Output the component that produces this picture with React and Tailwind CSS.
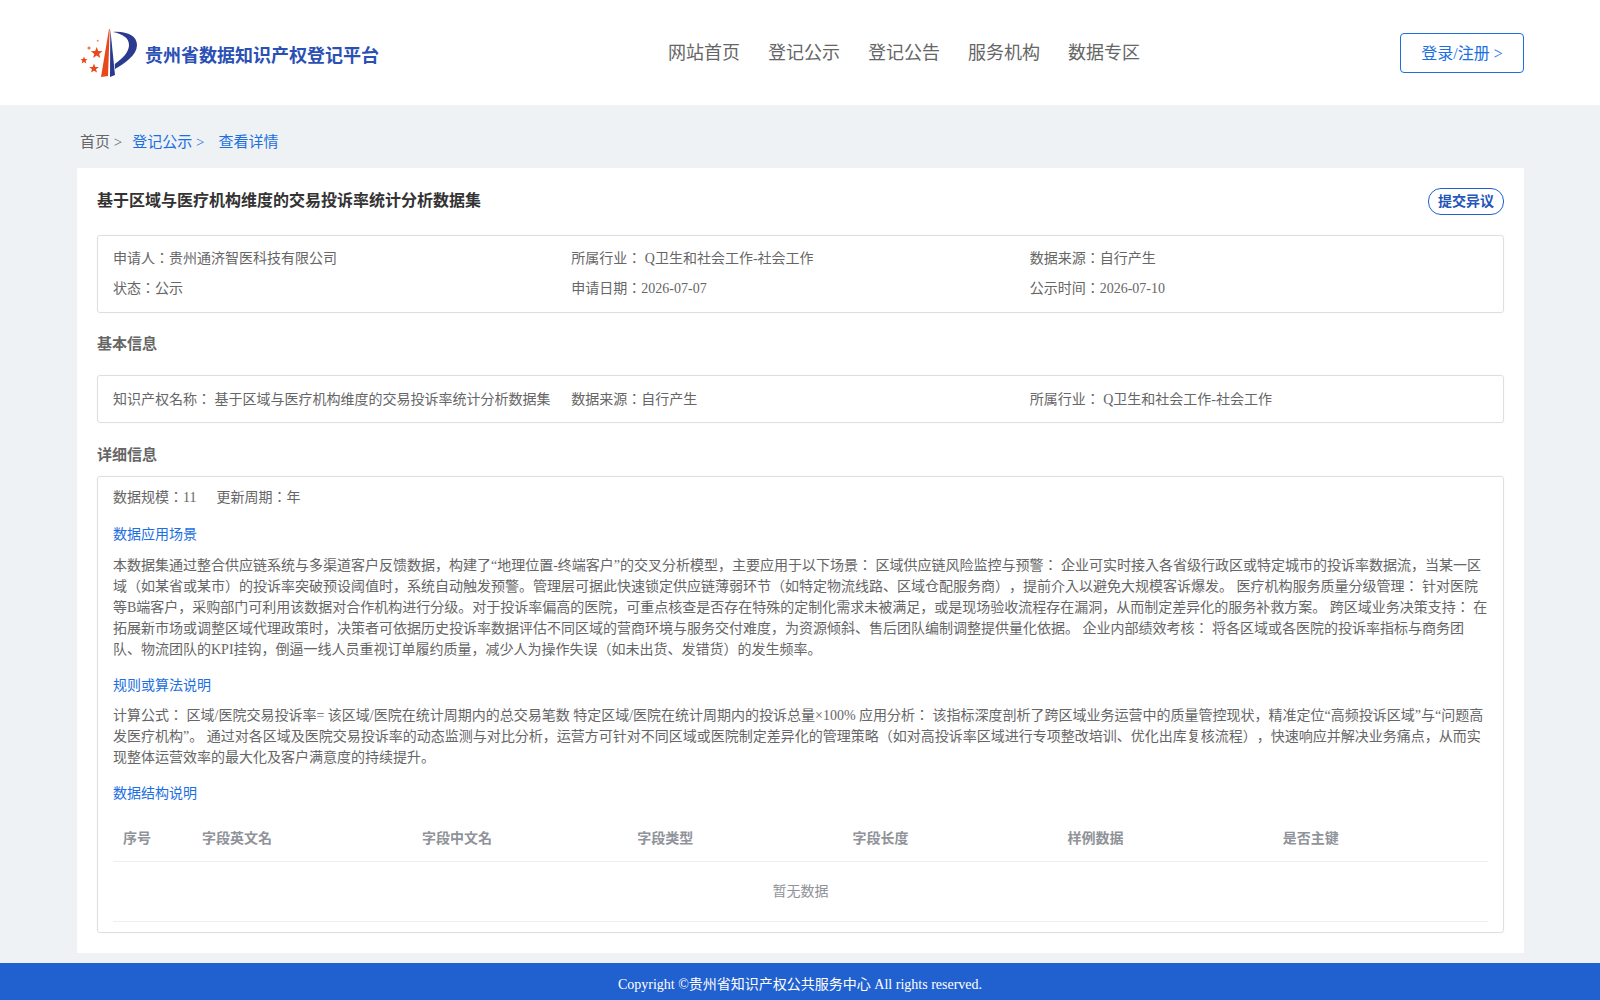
import React from 'react';

const columns = ['序号', '字段英文名', '字段中文名', '字段类型', '字段长度', '样例数据', '是否主键'];
const navItems = ['网站首页', '登记公示', '登记公告', '服务机构', '数据专区'];

const Logo = () => (
  <svg width="60" height="52" viewBox="0 0 60 52" className="shrink-0">
    <path d="M29 2 L29.7 2 L28 49 L21 50 Z" fill="#e8481a" />
    <path d="M30.3 2 L35 48 L30 50 Z" fill="#2a3a8f" />
    <path d="M33 5 C47 4 57 9 57 18 C57 28 45 36 35 42 L34.8 37 C43 31 49 25 49 18 C49 11 43 7 33 5 Z" fill="#2a3a8f" />
    <polygon points="16.7,20 18.2,24 22.5,24.2 19.1,26.9 20.3,31 16.7,28.6 13.1,31 14.3,26.9 10.9,24.2 15.2,24" fill="#e8481a" />
    <polygon points="4,29.5 5,32 7.6,32.2 5.6,33.8 6.2,36.4 4,35 1.8,36.4 2.4,33.8 0.4,32.2 3,32" fill="#e8481a" />
    <polygon points="14,36.5 15.3,39.9 18.8,40 16,42.2 17,45.6 14,43.7 11,45.6 12,42.2 9.2,40 12.7,39.9" fill="#e8481a" />
    <circle cx="9" cy="21" r="1.6" fill="#ef7a50" />
    <circle cx="17.7" cy="13.7" r="1" fill="#ef8a66" />
  </svg>
);

const Box = ({ className, children }) => (
  <div className={`border border-[#dcdfe6] rounded-[3px] shadow-[0_0_2px_rgba(0,0,0,0.06)] ${className}`}>{children}</div>
);

const App = () => {
  return (
    <div className="min-h-screen flex flex-col bg-[#eff2f5] text-[14px] text-[#666] [text-spacing-trim:space-all] font-['Liberation_Serif','Noto_Sans_CJK_JP',serif]">
      <header className="h-[105px] bg-white pl-[80px] pr-[76px] flex items-center">
        <div className="w-[588px] flex items-center gap-[5px]">
          <Logo />
          <span className="text-[18px] font-bold text-[#2b50b5] pt-[8px]">贵州省数据知识产权登记平台</span>
        </div>
        <nav className="flex gap-[28px] text-[18px] text-[#666] mt-[2px]">
          {navItems.map((item) => (
            <a key={item}>{item}</a>
          ))}
        </nav>
        <button className="ml-auto w-[124px] h-[40px] pt-[2px] border border-[#1b6fe0] rounded-[4px] bg-white text-[16px] text-[#1b6fe0]">登录/注册 &gt;</button>
      </header>

      <main className="w-[1447px] ml-[77px] flex-1">
        <div className="h-[63px] flex items-center pl-[3px] pt-[11px] text-[15px]">
          <span>首页 &gt;</span>
          <span className="text-[#1b6fe0] ml-[10px]">登记公示 &gt;</span>
          <span className="text-[#1b6fe0] ml-[14px]">查看详情</span>
        </div>

        <section className="bg-white h-[785px] px-[20px] pt-[20px]">
          <div className="flex items-start justify-between h-[47px]">
            <h1 className="text-[16px] font-bold text-[#333] leading-[24px] pt-[1px]">基于区域与医疗机构维度的交易投诉率统计分析数据集</h1>
            <button className="w-[76px] h-[27px] border border-[#1f5fd0] rounded-[13px] text-[14px] font-bold text-[#2255b8]">提交异议</button>
          </div>

          <Box className="h-[78px] px-[15px] pt-[8px] grid grid-cols-3 content-start leading-[30px]">
            <div>申请人：贵州通济智医科技有限公司</div>
            <div>所属行业： Q卫生和社会工作-社会工作</div>
            <div>数据来源：自行产生</div>
            <div>状态：公示</div>
            <div>申请日期：2026-07-07</div>
            <div>公示时间：2026-07-10</div>
          </Box>

          <h2 className="text-[15px] font-bold text-[#666] leading-[22px] mt-[20px] mb-[20px]">基本信息</h2>

          <Box className="h-[48px] px-[15px] grid grid-cols-3 items-center">
            <div className="whitespace-nowrap">知识产权名称： 基于区域与医疗机构维度的交易投诉率统计分析数据集</div>
            <div>数据来源：自行产生</div>
            <div>所属行业： Q卫生和社会工作-社会工作</div>
          </Box>

          <h2 className="text-[15px] font-bold text-[#666] leading-[22px] mt-[21px] mb-[10px]">详细信息</h2>

          <Box className="h-[457px] px-[15px] pt-[3px]">
            <div className="flex gap-[20px] leading-[36px] h-[36px]">
              <span>数据规模：11</span>
              <span>更新周期：年</span>
            </div>
            <div className="text-[#1b6fe0] leading-[21px] mt-[8px]">数据应用场景</div>
            <p className="leading-[21px] mt-[10px]">
              本数据集通过整合供应链系统与多渠道客户反馈数据，构建了“地理位置-终端客户”的交叉分析模型，主要应用于以下场景： 区域供应链风险监控与预警： 企业可实时接入各省级行政区或特定城市的投诉率数据流，当某一区域（如某省或某市）的投诉率突破预设阈值时，系统自动触发预警。管理层可据此快速锁定供应链薄弱环节（如特定物流线路、区域仓配服务商），提前介入以避免大规模客诉爆发。 医疗机构服务质量分级管理： 针对医院等B端客户，采购部门可利用该数据对合作机构进行分级。对于投诉率偏高的医院，可重点核查是否存在特殊的定制化需求未被满足，或是现场验收流程存在漏洞，从而制定差异化的服务补救方案。 跨区域业务决策支持： 在拓展新市场或调整区域代理政策时，决策者可依据历史投诉率数据评估不同区域的营商环境与服务交付难度，为资源倾斜、售后团队编制调整提供量化依据。 企业内部绩效考核： 将各区域或各医院的投诉率指标与商务团队、物流团队的KPI挂钩，倒逼一线人员重视订单履约质量，减少人为操作失误（如未出货、发错货）的发生频率。
            </p>
            <div className="text-[#1b6fe0] leading-[21px] mt-[15px]">规则或算法说明</div>
            <p className="leading-[21px] mt-[9px]">
              计算公式： 区域/医院交易投诉率= 该区域/医院在统计周期内的总交易笔数 特定区域/医院在统计周期内的投诉总量×100% 应用分析： 该指标深度剖析了跨区域业务运营中的质量管控现状，精准定位“高频投诉区域”与“问题高发医疗机构”。 通过对各区域及医院交易投诉率的动态监测与对比分析，运营方可针对不同区域或医院制定差异化的管理策略（如对高投诉率区域进行专项整改培训、优化出库复核流程），快速响应并解决业务痛点，从而实现整体运营效率的最大化及客户满意度的持续提升。
            </p>
            <div className="text-[#1b6fe0] leading-[21px] mt-[15px]">数据结构说明</div>
            <div className="mt-[12px] grid grid-cols-[79px_220px_repeat(5,1fr)] h-[46px] items-center border-b border-[#ebeef5] font-bold text-[#909399]">
              {columns.map((col) => (
                <div key={col} className="px-[10px]">{col}</div>
              ))}
            </div>
            <div className="h-[60px] flex items-center justify-center border-b border-[#ebeef5] text-[#909399]">暂无数据</div>
          </Box>
        </section>
      </main>

      <footer className="h-[37px] bg-[#2160cf] flex items-center justify-center pt-[6px] text-[14px] text-white">
        Copyright ©贵州省知识产权公共服务中心 All rights reserved.
      </footer>
    </div>
  );
};

export default App;
